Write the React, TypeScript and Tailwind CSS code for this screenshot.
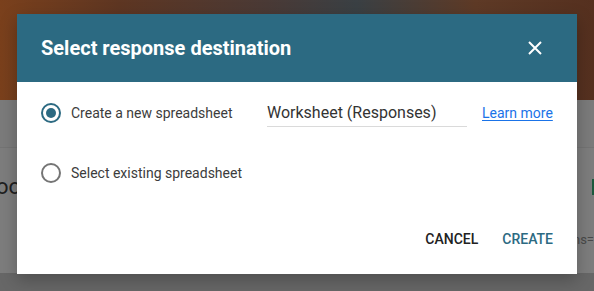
import React from "react";

const font = { fontFamily: "Roboto, 'Noto Sans', Arial, sans-serif" };

function Radio({ checked }: { checked?: boolean }) {
  return (
    <span
      className={`flex h-[20px] w-[20px] shrink-0 items-center justify-center rounded-full border-2 ${
        checked ? "border-[#2c6a82]" : "border-[#757575]"
      }`}
    >
      {checked && <span className="h-[10px] w-[10px] rounded-full bg-[#2c6a82]" />}
    </span>
  );
}

export default function App() {
  return (
    <div className="relative h-[291px] w-[594px] overflow-hidden" style={font}>
      {/* dimmed page behind the dialog */}
      <div className="flex h-full flex-col">
        <div className="h-[100px] bg-[linear-gradient(90deg,#7a401c_0%,#5e3622_20%,#4a3a36_45%,#3a4044_60%,#5e3a26_80%,#55301f_100%)]" />
        <div className="flex h-[48px] bg-[#7b7b7b] border-b border-[#747474]" />
        <div className="flex flex-1 flex-col justify-between bg-[#7d7d7d]">
          <div className="flex items-center justify-between pt-[28px]">
            <span className="-ml-[4px] text-[22px] leading-none text-[#1f1f1f]">oo</span>
            <span className="mr-[-4px] h-[16px] w-[6px] bg-[#1d5a3e]" />
          </div>
          <div className="flex justify-end pb-[42px]">
            <span className="text-[13px] text-[#4a4a4a]">ns=</span>
          </div>
        </div>
      </div>
      <div className="absolute inset-x-0 bottom-0 h-[18px] bg-[#676767]" />

      {/* dialog */}
      <div className="absolute left-[17px] top-[14px] flex h-[260px] w-[560px] flex-col bg-white shadow-[0_6px_16px_rgba(0,0,0,0.25)]">
        <div className="flex h-[68px] items-center justify-between bg-[#2c6a82] pl-[24px] pr-[34px]">
          <h1 className="text-[20px] font-bold text-white">
            Select response destination
          </h1>
          <svg width="16" height="16" viewBox="0 0 16 16" className="text-white">
            <path d="M2 2 L14 14 M14 2 L2 14" stroke="currentColor" strokeWidth="2" />
          </svg>
        </div>

        <div className="flex flex-col px-[24px] pt-[17px]">
          <div className="flex h-[28px] items-center">
            <Radio checked />
            <span className="ml-[10px] w-[196px] text-[14px] text-[#3c3c3c]">
              Create a new spreadsheet
            </span>
            <div className="flex h-[28px] w-[200px] items-center border-b border-[#dadada]">
              <span className="text-[16px] text-[#333]">Worksheet (Responses)</span>
            </div>
            <a className="ml-[15px] text-[14px] text-[#1a73e8] underline underline-offset-2">
              Learn more
            </a>
          </div>
          <div className="mt-[32px] flex h-[28px] items-center">
            <Radio />
            <span className="ml-[10px] text-[14px] text-[#3c3c3c]">
              Select existing spreadsheet
            </span>
          </div>
        </div>

        <div className="mt-auto flex items-center justify-end gap-[24px] pb-[24px] pr-[24px]">
          <button className="text-[14px] font-medium text-[#222]">CANCEL</button>
          <button className="text-[14px] font-medium text-[#2c6a82]">CREATE</button>
        </div>
      </div>
    </div>
  );
}
